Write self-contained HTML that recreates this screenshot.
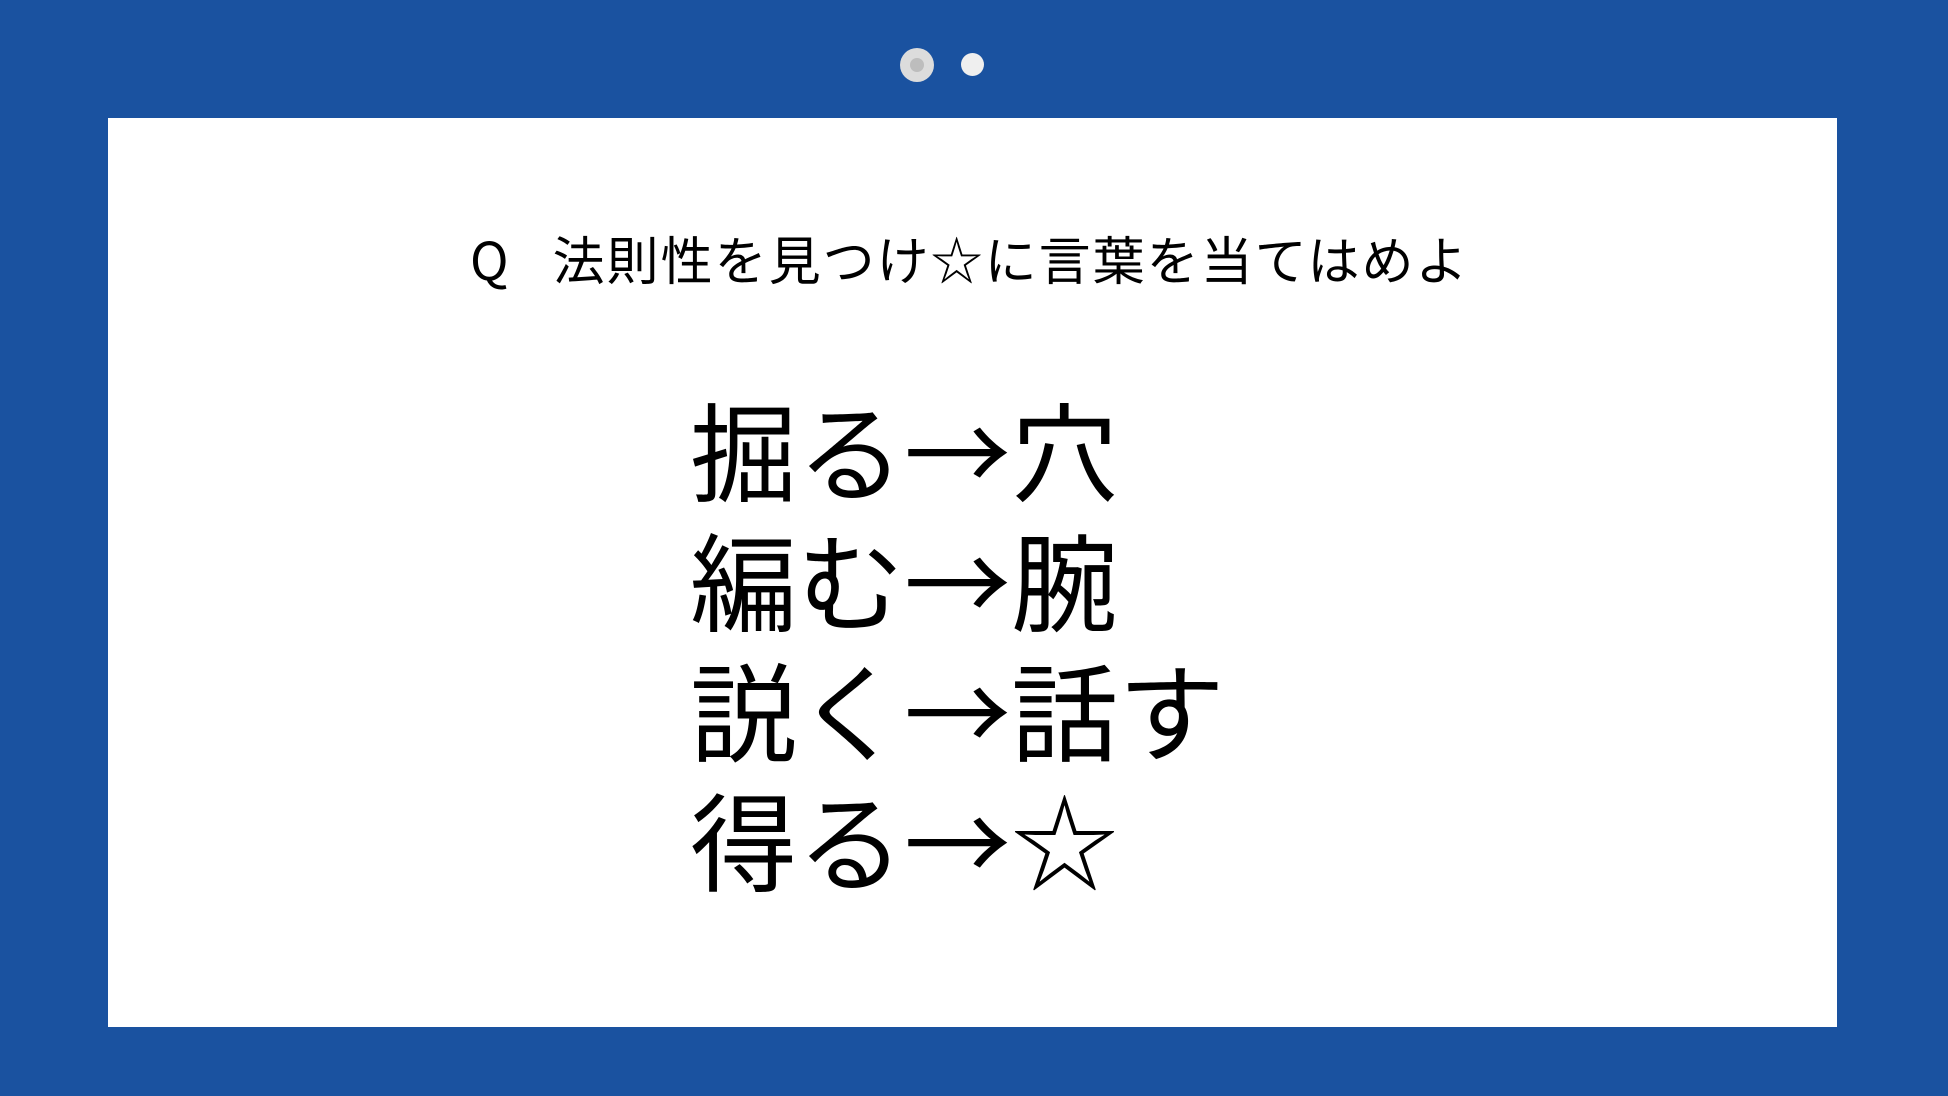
<!DOCTYPE html>
<html><head><meta charset="utf-8"><style>
html,body{margin:0;padding:0;}
body{width:1948px;height:1096px;background:#1a52a0;position:relative;overflow:hidden;font-family:"Liberation Sans","Noto Sans CJK JP",sans-serif;}
.box{position:absolute;left:108px;top:118px;width:1729px;height:909px;background:#fff;}
.d1{position:absolute;left:900px;top:48px;width:34px;height:34px;border-radius:50%;background:#dcdcdc;}
.d1:after{content:"";position:absolute;left:10px;top:10px;width:14px;height:14px;border-radius:50%;background:#bdbdbd;}
.d2{position:absolute;left:961px;top:53px;width:23px;height:23px;border-radius:50%;background:#efefef;}
.q{position:absolute;left:470px;top:224px;font-size:52px;line-height:68px;color:#000;white-space:nowrap;font-family:"Noto Sans CJK JP",sans-serif;}
.q span{letter-spacing:2px;margin-left:-8px;}
.m{position:absolute;left:690px;top:382px;font-size:107px;line-height:130px;color:#000;white-space:nowrap;font-family:"Noto Sans CJK JP",sans-serif;}
</style></head><body>
<div class="d1"></div><div class="d2"></div>
<div class="box"></div>
<div class="q">Q　<span>法則性を見つけ☆に言葉を当てはめよ</span></div>
<div class="m">掘る→穴<br>編む→腕<br>説く→話す<br>得る→☆</div>
</body></html>
